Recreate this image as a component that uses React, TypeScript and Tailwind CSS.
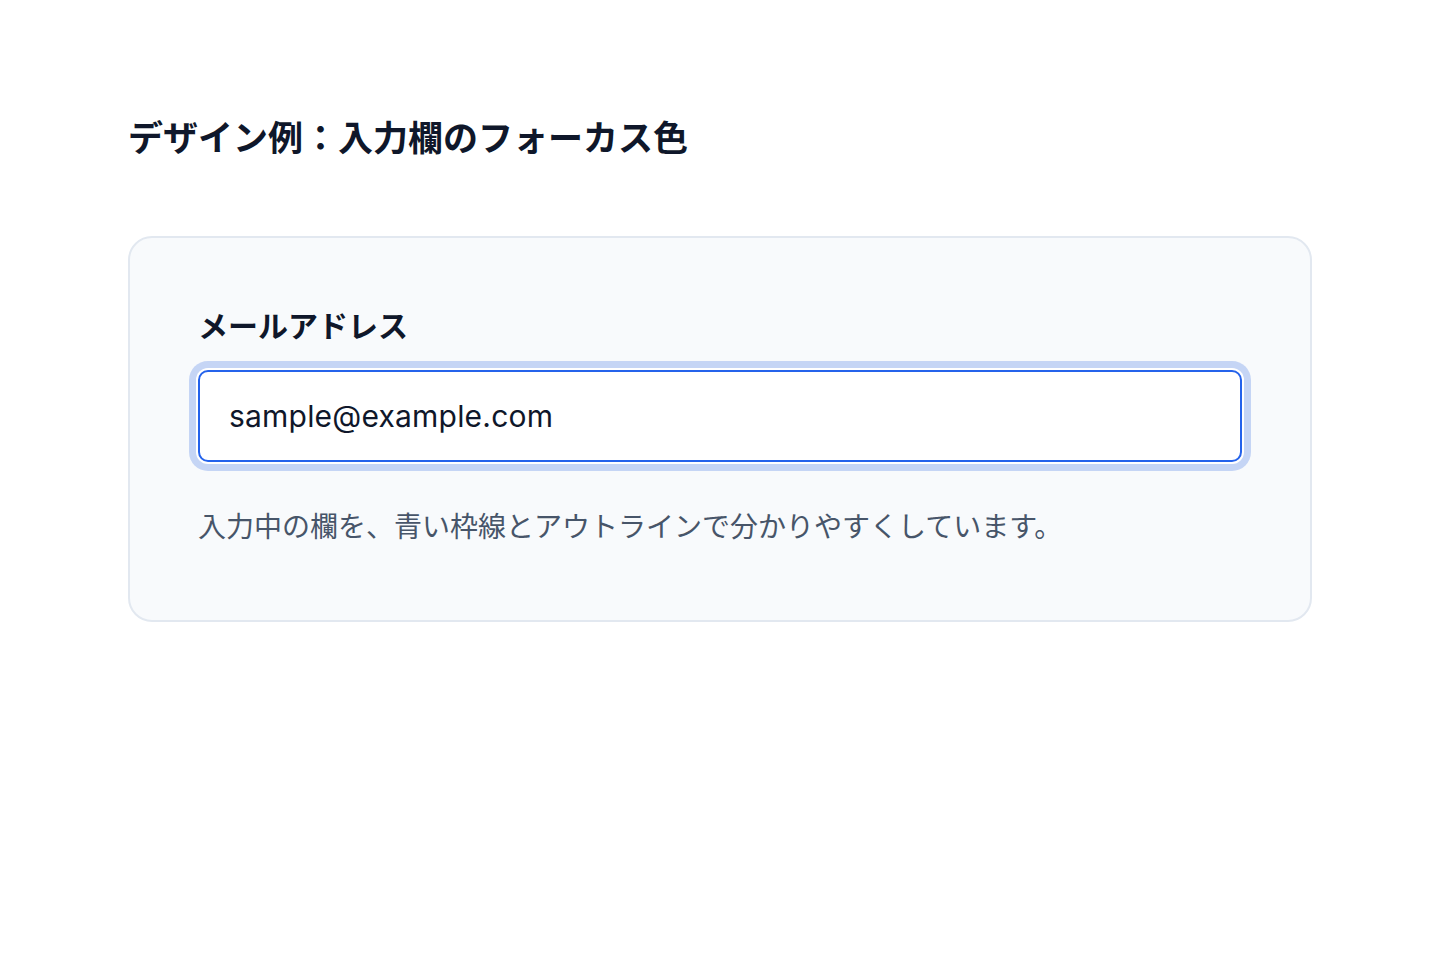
export default function App() {
  return (
    <div
      className="min-h-screen bg-white px-[128px] pt-[110px]"
      style={{ fontFamily: '"Noto Sans CJK JP", "Noto Sans", sans-serif' }}
    >
      <h1 className="text-[35px] font-bold leading-[51px] text-[#0f172a]">
        デザイン例：入力欄のフォーカス色
      </h1>

      <div className="mt-[75px] w-[1184px] rounded-[24px] border-2 border-[#e2e8f0] bg-[#f8fafc] px-[68px] pt-[64px] pb-[75px]">
        <label
          htmlFor="email"
          className="block text-[30px] font-bold leading-[44px] text-[#0f172a]"
        >
          メールアドレス
        </label>
        <input
          id="email"
          type="email"
          defaultValue="sample@example.com"
          readOnly
          className="mt-[24px] block h-[92px] w-full rounded-[10px] border-2 border-[#2563eb] bg-white px-[29px] text-[30px] tracking-[0.2px] text-[#0f172a] outline-none shadow-[0_0_0_2px_#ffffff,0_0_0_9px_#c5d5f5]"
          style={{ fontFamily: 'Inter, "Noto Sans CJK JP", sans-serif' }}
        />
        <p className="mt-[43px] text-[28px] leading-[40px] text-[#475569]">
          入力中の欄を、青い枠線とアウトラインで分かりやすくしています。
        </p>
      </div>
    </div>
  );
}
